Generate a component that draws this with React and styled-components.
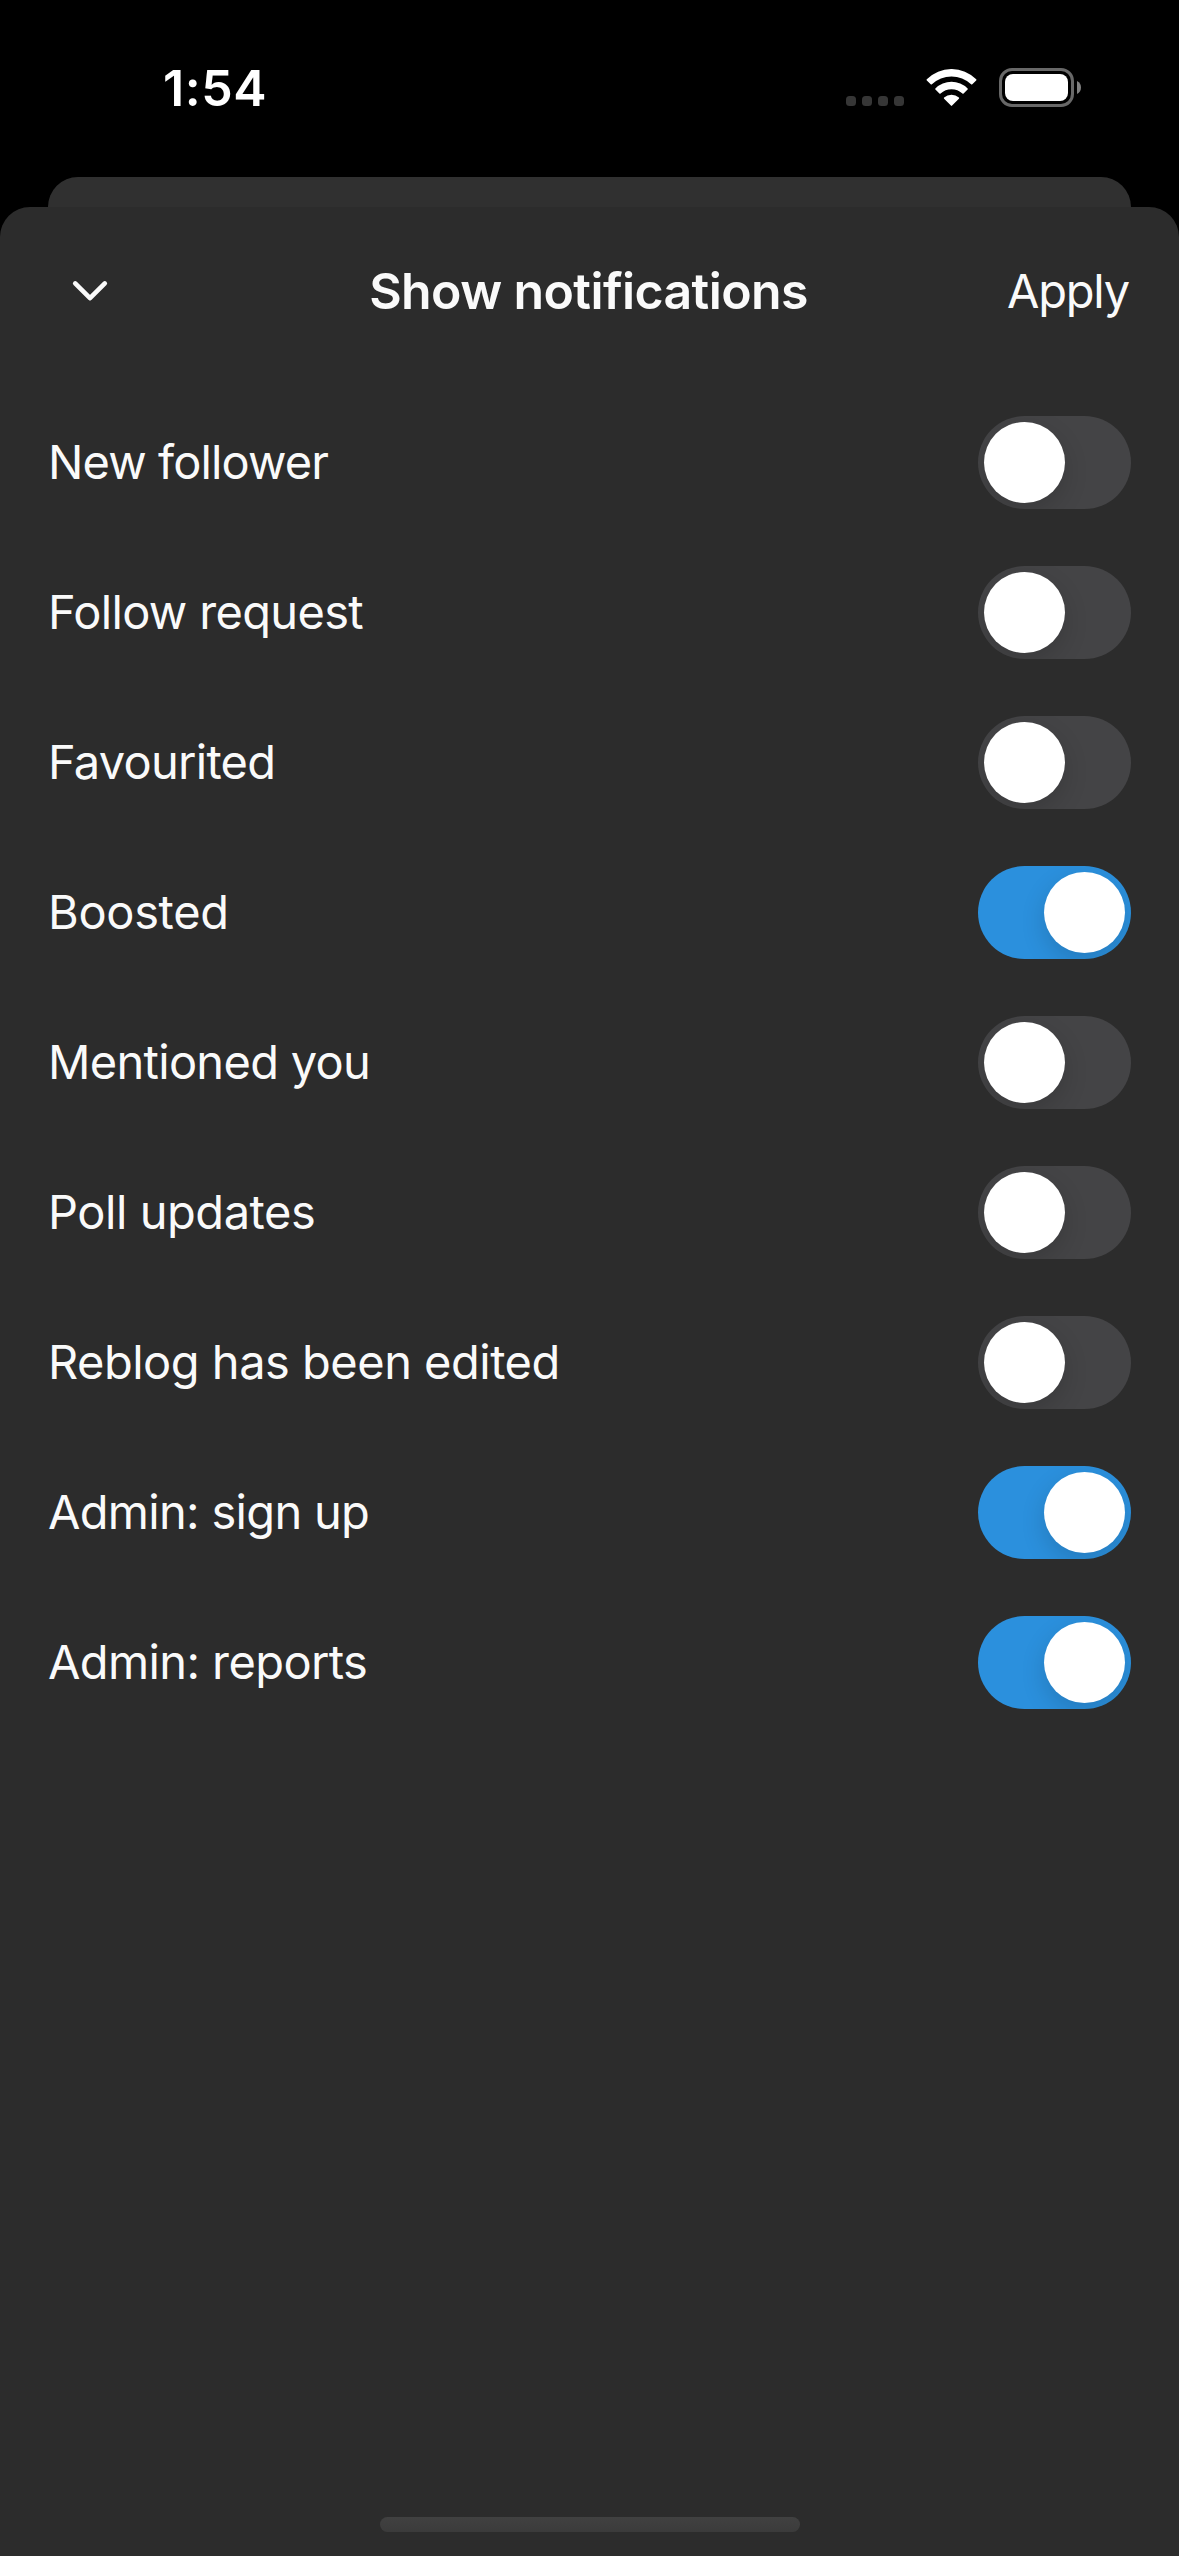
import React, { useState } from "react";
import styled, { createGlobalStyle } from "styled-components";

const GlobalStyle = createGlobalStyle`
  *, *::before, *::after { box-sizing: border-box; }

  body {
    margin: 0;
    background: #000;
    color: #fafafa;
    font-family: Inter, "Liberation Sans", sans-serif;
  }
`;

const Screen = styled.div`
  display: flex;
  flex-direction: column;
  width: 1179px;
  height: 2556px;
  overflow: hidden;
  background: #000;
`;

const StatusBar = styled.header`
  flex: none;
  display: flex;
  align-items: flex-start;
  justify-content: space-between;
  height: 177px;
  padding: 58px 98px 0 163px;
  color: #fff;
`;

const Clock = styled.time`
  font-size: 50px;
  font-weight: 600;
  line-height: 60px;
  letter-spacing: 0.6px;
`;

const StatusIcons = styled.div`
  display: flex;
  align-items: flex-end;
  margin-top: 10px;
`;

const SignalDots = styled.div`
  display: flex;
  gap: 6px;
  margin: 0 22px 1px 0;
`;

const Dot = styled.span`
  width: 10px;
  height: 10px;
  border-radius: 3.5px;
  background: #363636;
`;

const WifiIcon = styled.svg`
  display: block;
  width: 51px;
  height: 38px;
  margin: 0 22px 0.5px 0;
`;

const BatteryIcon = styled.svg`
  display: block;
  width: 82px;
  height: 39px;
`;

const BackCard = styled.div`
  flex: none;
  height: 30px;
  margin: 0 48px;
  border-radius: 30px 30px 0 0;
  background: #303030;
`;

const Sheet = styled.main`
  flex: 1;
  display: flex;
  flex-direction: column;
  border-radius: 30px 30px 0 0;
  background: #2c2c2c;
`;

const SheetHeader = styled.div`
  display: grid;
  grid-template-columns: 1fr auto 1fr;
  align-items: start;
  height: 180px;
  padding: 54px 50px 0 48px;
`;

const HeaderButton = styled.button`
  display: block;
  justify-self: ${({ $align }) => $align};
  margin: 0;
  padding: 0;
  border: 0;
  background: none;
  color: inherit;
  font: inherit;
`;

const ApplyButton = styled(HeaderButton)`
  margin-top: 1px;
  font-size: 47px;
  line-height: 57px;
  letter-spacing: -1.2px;
`;

const ChevronIcon = styled.svg`
  display: block;
  width: 84px;
  height: 60px;
`;

const Title = styled.h1`
  margin: 0;
  font-size: 50px;
  font-weight: 600;
  line-height: 60px;
  letter-spacing: -0.6px;
`;

const OptionList = styled.ul`
  margin: 0;
  padding: 0 48px;
  list-style: none;
`;

const OptionRow = styled.li`
  display: flex;
  align-items: flex-start;
  justify-content: space-between;
  height: 150px;
  padding-top: 29px;
`;

const OptionLabel = styled.span`
  font-size: 47px;
  line-height: 91px;
  letter-spacing: ${({ $tracking }) => $tracking}px;
  white-space: nowrap;
`;

const Track = styled.button`
  display: flex;
  justify-content: ${({ $on }) => ($on ? "flex-end" : "flex-start")};
  width: 153px;
  height: 93px;
  margin: 0;
  padding: 6px;
  border: 0;
  border-radius: 47px;
  overflow: hidden;
  background: ${({ $on }) => ($on ? "#2b90dd" : "#444446")};
`;

const Knob = styled.span`
  width: 81px;
  height: 81px;
  border-radius: 50%;
  background: #fff;
  box-shadow: 0 9px 24px rgba(0, 0, 0, 0.15);
`;

const HomeIndicator = styled.div`
  width: 420px;
  height: 15px;
  margin: auto auto 24px;
  border-radius: 8px;
  background: linear-gradient(#414141, #3b3b3b);
`;

const OPTIONS = [
  { label: "New follower", on: false, tracking: -0.88 },
  { label: "Follow request", on: false, tracking: -0.66 },
  { label: "Favourited", on: false, tracking: -0.74 },
  { label: "Boosted", on: true, tracking: -0.33 },
  { label: "Mentioned you", on: false, tracking: -0.7 },
  { label: "Poll updates", on: false, tracking: -0.45 },
  { label: "Reblog has been edited", on: false, tracking: -0.5 },
  { label: "Admin: sign up", on: true, tracking: -0.69 },
  { label: "Admin: reports", on: true, tracking: -0.6 },
];

function Wifi() {
  return (
    <WifiIcon viewBox="0 0 51 38" fill="#fff" aria-hidden="true">
      <path d="M0.8 10.2 A35 35 0 0 1 50.2 10.2 Q50.7 10.8 50.2 11.4 L46.3 15.3 Q45.7 15.8 45.1 15.3 A28.6 28.6 0 0 0 5.9 15.3 Q5.3 15.8 4.7 15.3 L0.8 11.4 Q0.3 10.8 0.8 10.2 Z" />
      <path d="M9.4 19.4 A23 23 0 0 1 41.6 19.4 Q42.2 20 41.6 20.6 L37.6 24.5 Q37 25 36.4 24.5 A16 16 0 0 0 14.6 24.5 Q14 25 13.4 24.5 L9.4 20.6 Q8.8 20 9.4 19.4 Z" />
      <path d="M18.1 28.6 A10.8 10.8 0 0 1 32.9 28.6 Q33.5 29.2 32.9 29.8 L26.1 36.6 Q25.5 37.2 24.9 36.6 L18.1 29.8 Q17.5 29.2 18.1 28.6 Z" />
    </WifiIcon>
  );
}

function Battery() {
  return (
    <BatteryIcon viewBox="0 0 82 39" aria-hidden="true">
      <rect x="1.5" y="1.5" width="72" height="36" rx="11.5" fill="none" stroke="#686868" strokeWidth="3" />
      <rect x="6" y="6" width="63" height="27" rx="8" fill="#fff" />
      <path d="M78 13 C80.9 14.2 82 16.8 82 19.5 C82 22.2 80.9 24.8 78 26 Z" fill="#808080" />
    </BatteryIcon>
  );
}

function Switch({ on, label, onToggle }) {
  return (
    <Track type="button" role="switch" aria-checked={on} aria-label={label} $on={on} onClick={onToggle}>
      <Knob />
    </Track>
  );
}

export default function App() {
  const [options, setOptions] = useState(OPTIONS);

  const toggle = (label) =>
    setOptions((current) => current.map((o) => (o.label === label ? { ...o, on: !o.on } : o)));

  return (
    <Screen>
      <GlobalStyle />
      <StatusBar>
        <Clock>1:54</Clock>
        <StatusIcons>
          <SignalDots>
            <Dot />
            <Dot />
            <Dot />
            <Dot />
          </SignalDots>
          <Wifi />
          <Battery />
        </StatusIcons>
      </StatusBar>
      <BackCard />
      <Sheet>
        <SheetHeader>
          <HeaderButton type="button" aria-label="Close" $align="start">
            <ChevronIcon viewBox="0 0 84 60" fill="none" aria-hidden="true">
              <path
                d="M27.2 22.4 L42 37.2 L56.8 22.4"
                stroke="#fafafa"
                strokeWidth="4.6"
                strokeLinecap="round"
                strokeLinejoin="round"
              />
            </ChevronIcon>
          </HeaderButton>
          <Title>Show notifications</Title>
          <ApplyButton type="button" $align="end">Apply</ApplyButton>
        </SheetHeader>
        <OptionList>
          {options.map(({ label, on, tracking }) => (
            <OptionRow key={label}>
              <OptionLabel $tracking={tracking}>{label}</OptionLabel>
              <Switch on={on} label={label} onToggle={() => toggle(label)} />
            </OptionRow>
          ))}
        </OptionList>
        <HomeIndicator />
      </Sheet>
    </Screen>
  );
}
